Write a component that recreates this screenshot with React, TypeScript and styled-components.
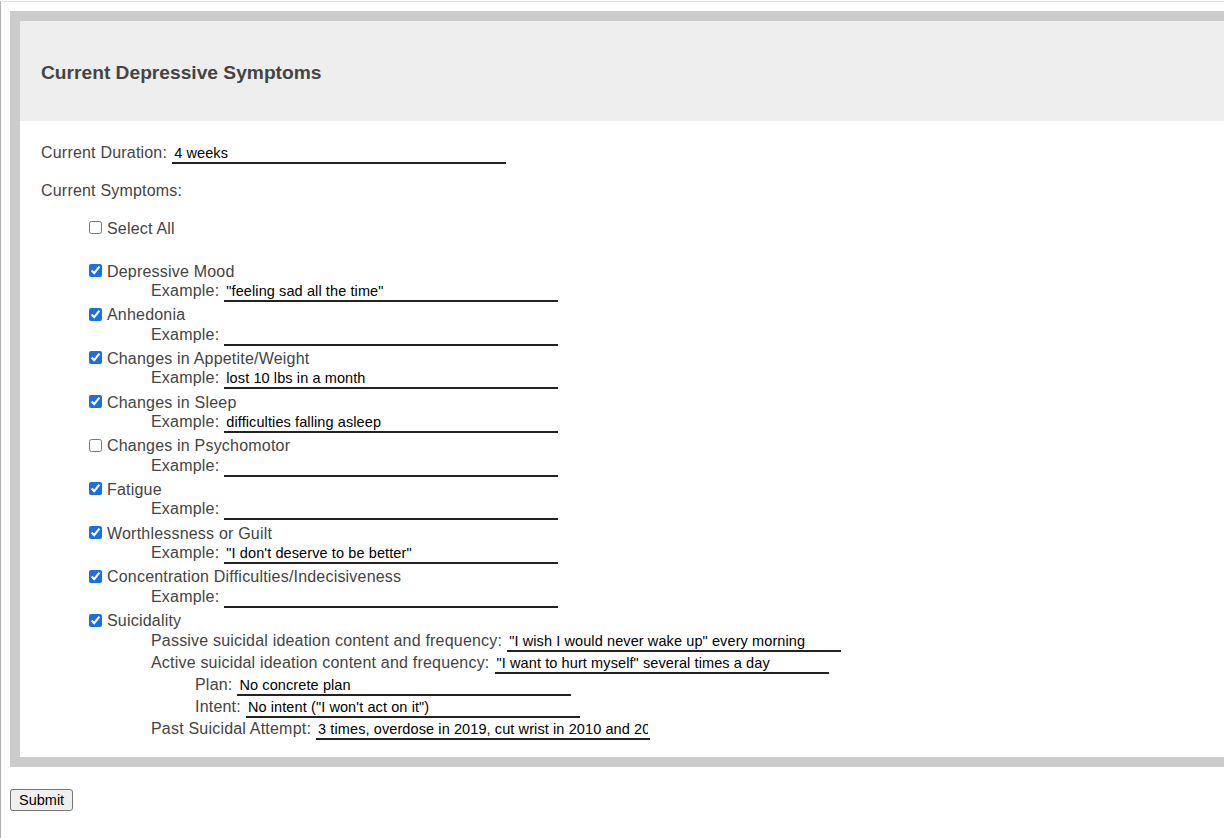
import React, { useState } from 'react';
import styled, { createGlobalStyle } from 'styled-components';

interface Symptom {
  label: string;
  checked: boolean;
  example: string;
}

const initialSymptoms: Symptom[] = [
  { label: 'Depressive Mood', checked: true, example: '"feeling sad all the time"' },
  { label: 'Anhedonia', checked: true, example: '' },
  { label: 'Changes in Appetite/Weight', checked: true, example: 'lost 10 lbs in a month' },
  { label: 'Changes in Sleep', checked: true, example: 'difficulties falling asleep' },
  { label: 'Changes in Psychomotor', checked: false, example: '' },
  { label: 'Fatigue', checked: true, example: '' },
  { label: 'Worthlessness or Guilt', checked: true, example: '"I don\'t deserve to be better"' },
  { label: 'Concentration Difficulties/Indecisiveness', checked: true, example: '' },
];

const GlobalStyle = createGlobalStyle`
  html, body {
    margin: 0;
    padding: 0;
    background: #fff;
    overflow: hidden;
  }
  body {
    font-family: "Liberation Sans", Arial, Helvetica, sans-serif;
  }
`;

export default function App() {
  const [symptoms, setSymptoms] = useState(initialSymptoms);
  const [suicidality, setSuicidality] = useState(true);

  const allChecked = symptoms.every(s => s.checked) && suicidality;

  const toggle = (i: number) =>
    setSymptoms(prev => prev.map((s, idx) => (idx === i ? { ...s, checked: !s.checked } : s)));

  const toggleAll = () => {
    const next = !allChecked;
    setSymptoms(prev => prev.map(s => ({ ...s, checked: next })));
    setSuicidality(next);
  };

  return (
    <>
      <GlobalStyle />
      <Page>
        <TopRule />
        <Form onSubmit={e => e.preventDefault()}>
          <Card>
            <CardHeader>
              <Title>Current Depressive Symptoms</Title>
            </CardHeader>
            <CardBody>
              <FieldRow $height={22}>
                <Label>Current Duration:</Label>
                <LineInput defaultValue="4 weeks" />
              </FieldRow>
              <SectionLabel>Current Symptoms:</SectionLabel>

              <SymptomList>
                <CheckRow $gapAfter={22}>
                  <Check type="checkbox" checked={allChecked} onChange={toggleAll} />
                  <Label>Select All</Label>
                </CheckRow>

                {symptoms.map((s, i) => (
                  <React.Fragment key={s.label}>
                    <CheckRow>
                      <Check type="checkbox" checked={s.checked} onChange={() => toggle(i)} />
                      <Label>{s.label}</Label>
                    </CheckRow>
                    <FieldRow $height={22.7} $indent={66}>
                      <Label>Example:</Label>
                      <LineInput defaultValue={s.example} />
                    </FieldRow>
                  </React.Fragment>
                ))}

                <CheckRow>
                  <Check type="checkbox" checked={suicidality} onChange={() => setSuicidality(v => !v)} />
                  <Label>Suicidality</Label>
                </CheckRow>
                <FieldRow $height={22} $indent={66}>
                  <Label>Passive suicidal ideation content and frequency:</Label>
                  <LineInput defaultValue={'"I wish I would never wake up" every morning'} />
                </FieldRow>
                <FieldRow $height={22} $indent={66}>
                  <Label>Active suicidal ideation content and frequency:</Label>
                  <LineInput defaultValue={'"I want to hurt myself" several times a day'} />
                </FieldRow>
                <FieldRow $height={22} $indent={110}>
                  <Label>Plan:</Label>
                  <LineInput defaultValue="No concrete plan" />
                </FieldRow>
                <FieldRow $height={22} $indent={110}>
                  <Label>Intent:</Label>
                  <LineInput defaultValue={'No intent ("I won\'t act on it")'} />
                </FieldRow>
                <FieldRow $height={22} $indent={66}>
                  <Label>Past Suicidal Attempt:</Label>
                  <LineInput defaultValue="3 times, overdose in 2019, cut wrist in 2010 and 2015" />
                </FieldRow>
              </SymptomList>
            </CardBody>
          </Card>
          <SubmitButton type="submit">Submit</SubmitButton>
        </Form>
      </Page>
    </>
  );
}

const Page = styled.div`
  min-height: 100vh;
  border-left: 1px solid #b4b4b8;
  box-sizing: border-box;
`;

const TopRule = styled.div`
  height: 1px;
  margin: 1px 0 0 2px;
  background: #dedede;
`;

const Form = styled.form`
  padding: 9px 0 0 9px;
`;

const Card = styled.div`
  width: 1240px;
  border: 10px solid #ccc;
  background: #fff;
`;

const CardHeader = styled.div`
  height: 100px;
  box-sizing: border-box;
  background: #eee;
  display: flex;
  align-items: center;
  padding: 3px 0 0 21px;
`;

const Title = styled.h3`
  margin: 0;
  font-size: 19.2px;
  font-weight: bold;
  color: #444;
`;

const CardBody = styled.div`
  padding: 23px 20px 15px 21px;
  color: #444;
  font-size: 16px;
`;

const Label = styled.span`
  white-space: nowrap;
  font-size: 16px;
  letter-spacing: 0.2px;
  color: #444;
`;

const FieldRow = styled.div<{ $height: number; $indent?: number }>`
  display: flex;
  align-items: baseline;
  gap: 5px;
  height: ${p => p.$height}px;
  padding-left: ${p => p.$indent ?? 0}px;
`;

const SectionLabel = styled.div`
  margin-top: 16px;
  height: 22px;
  line-height: 18px;
  letter-spacing: 0.2px;
`;

const SymptomList = styled.div`
  margin-top: 14px;
  padding-left: 44px;
`;

const CheckRow = styled.div<{ $gapAfter?: number }>`
  display: flex;
  align-items: center;
  height: 21px;
  margin-bottom: ${p => p.$gapAfter ?? 0}px;
`;

const Check = styled.input`
  width: 13px;
  height: 13px;
  margin: 0 5px 2px 4px;
  accent-color: #1a6fe6;
`;

const LineInput = styled.input`
  width: 334px;
  box-sizing: border-box;
  border: none;
  border-bottom: 2px solid #222;
  padding: 1px 2px;
  background: transparent;
  font-family: "Liberation Sans", Arial, Helvetica, sans-serif;
  font-size: 14.5px;
  letter-spacing: 0.1px;
  color: #000;
  outline: none;
`;

const SubmitButton = styled.button`
  margin-top: 22px;
  display: block;
  height: 22px;
  padding: 1px 8px;
  border: 1px solid #767676;
  border-radius: 3px;
  background: #efefef;
  font-family: "Liberation Sans", Arial, Helvetica, sans-serif;
  font-size: 14.5px;
  color: #000;
  cursor: pointer;
`;
